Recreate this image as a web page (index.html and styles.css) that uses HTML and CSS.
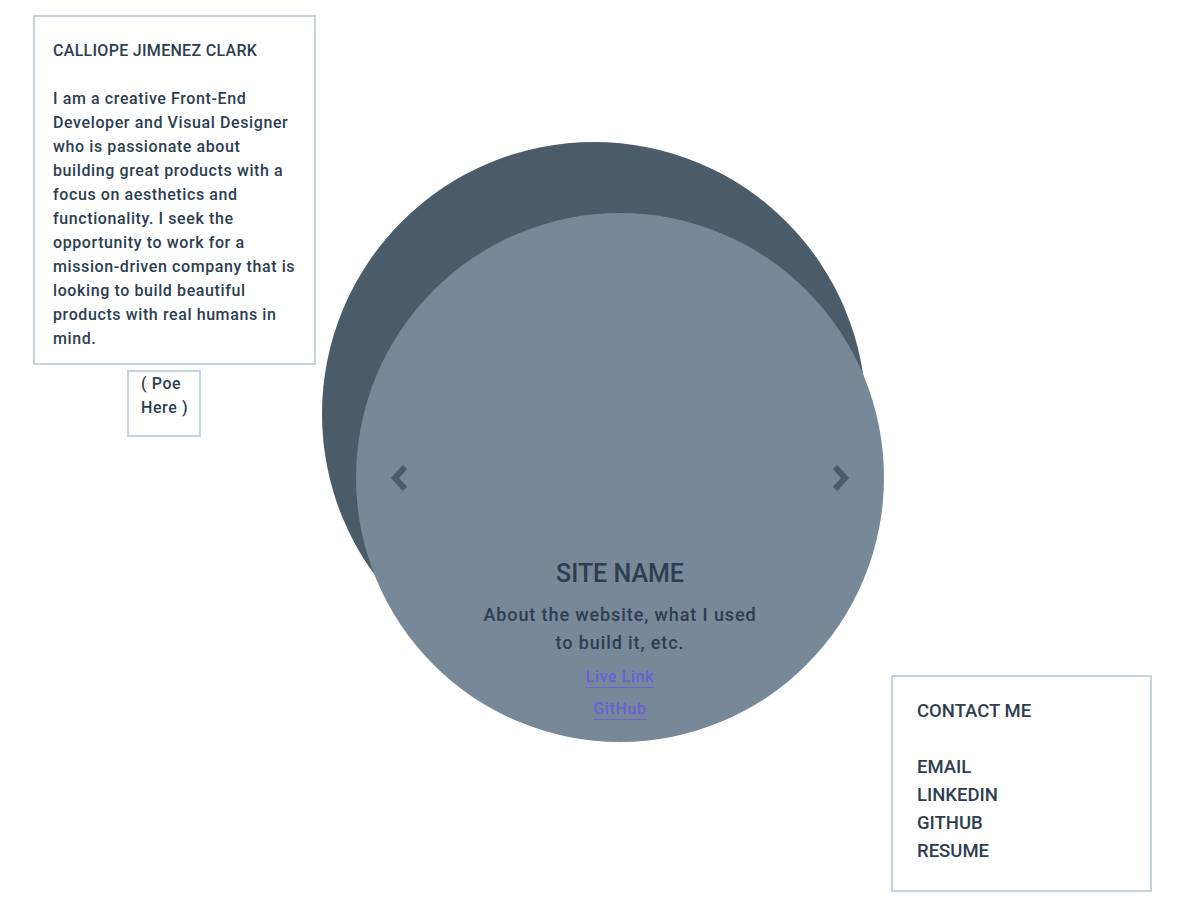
FILE: index.html
```html
<!DOCTYPE html>
<html lang="en">
  <head>
    <meta charset="UTF-8">
    <meta name="viewport" content="width=device-width, initial-scale=1.0">
    <title>Calliope Jimenez Clark</title>
    <link rel="stylesheet" href="styles.css">
  </head>
  <body>
    <div class="page">
      <div class="side">
        <div class="about">
          <h1>CALLIOPE JIMENEZ CLARK</h1>
          <p>I am a creative Front-End Developer and Visual Designer who is passionate about building great products with a focus on aesthetics and functionality. I seek the opportunity to work for a mission-driven company that is looking to build beautiful products with real humans in mind.</p>
        </div>
        <div class="poe">( Poe Here )</div>
      </div>

      <div class="stage">
        <div class="circle-back"></div>
        <div class="circle-front">
          <div class="nav">
            <a href="#" class="arrow">
              <svg width="22" height="30" viewBox="0 0 22 30"><polyline points="16,4 6,15 16,26" fill="none" stroke="#4a5b6a" stroke-width="6"/></svg>
            </a>
            <a href="#" class="arrow">
              <svg width="22" height="30" viewBox="0 0 22 30"><polyline points="6,4 16,15 6,26" fill="none" stroke="#4a5b6a" stroke-width="6"/></svg>
            </a>
          </div>
          <div class="caption">
            <h2>SITE NAME</h2>
            <p>About the website, what I used to build it, etc.</p>
            <a href="#">Live Link</a>
            <a href="#">GitHub</a>
          </div>
        </div>
      </div>

      <div class="contact">
        <h3>CONTACT ME</h3>
        <ul>
          <li>EMAIL</li>
          <li>LINKEDIN</li>
          <li>GITHUB</li>
          <li>RESUME</li>
        </ul>
      </div>
    </div>
  </body>
</html>
```

FILE: styles.css
```css
:root {
  --text: #2c3e50;
  --border: #c6d3de;
  --dark: #4a5b6a;
  --light: #778899;
  --link: #6a5fd6;
}

body {
  margin: 0;
  font-family: Roboto, "Liberation Sans", sans-serif;
  font-weight: 500;
  color: var(--text);
  background: #fff;
}

.page {
  display: flex;
  align-items: flex-start;
  padding: 15px 0 0 33px;
}

.side {
  width: 283px;
  flex-shrink: 0;
}

.about {
  border: 2px solid var(--border);
  padding: 22px 16px 12px 18px;
  font-size: 16px;
  line-height: 24px;
  letter-spacing: 0.6px;
}

.about h1 {
  margin: 0 0 24px;
  font-size: 16px;
  font-weight: 500;
  letter-spacing: 0.3px;
}

.about p {
  margin: 0;
}

.poe {
  width: 50px;
  height: 50px;
  margin: 5px 0 0 94px;
  padding: 0 8px 13px 12px;
  border: 2px solid var(--border);
  font-size: 16px;
  line-height: 24px;
  letter-spacing: 0.6px;
}

.stage {
  position: relative;
  width: 544px;
  height: 600px;
  margin: 127px 0 0 6px;
  flex-shrink: 0;
}

.circle-back {
  width: 544px;
  height: 544px;
  border-radius: 50%;
  background: var(--dark);
}

.circle-front {
  position: absolute;
  left: 34px;
  top: 71px;
  width: 528px;
  height: 529px;
  border-radius: 50%;
  background: var(--light);
  display: flex;
  flex-direction: column;
  align-items: center;
  padding-top: 250px;
  box-sizing: border-box;
}

.nav {
  width: 100%;
  display: flex;
  justify-content: space-between;
  padding: 0 33px;
  box-sizing: border-box;
}

.arrow {
  display: block;
  height: 30px;
}

.caption {
  width: 285px;
  margin-top: 66px;
  text-align: center;
}

.caption h2 {
  margin: 0 0 12px;
  font-size: 25px;
  line-height: 30px;
  font-weight: 500;
}

.caption p {
  margin: 0 0 4px;
  font-size: 18px;
  line-height: 28px;
  letter-spacing: 0.9px;
}

.caption a {
  display: block;
  width: fit-content;
  margin: 0 auto;
  color: var(--link);
  font-size: 16px;
  line-height: 32px;
  letter-spacing: 0.6px;
  text-decoration-color: var(--link);
  text-underline-offset: 5px;
}

.contact {
  width: 213px;
  margin: 660px 0 0 25px;
  padding: 20px 20px 25px 24px;
  border: 2px solid var(--border);
  font-size: 18.5px;
  line-height: 28px;
  flex-shrink: 0;
}

.contact h3 {
  margin: 0 0 28px;
  font-size: 18.5px;
  font-weight: 500;
}

.contact ul {
  margin: 0;
  padding: 0;
  list-style: none;
}
```
